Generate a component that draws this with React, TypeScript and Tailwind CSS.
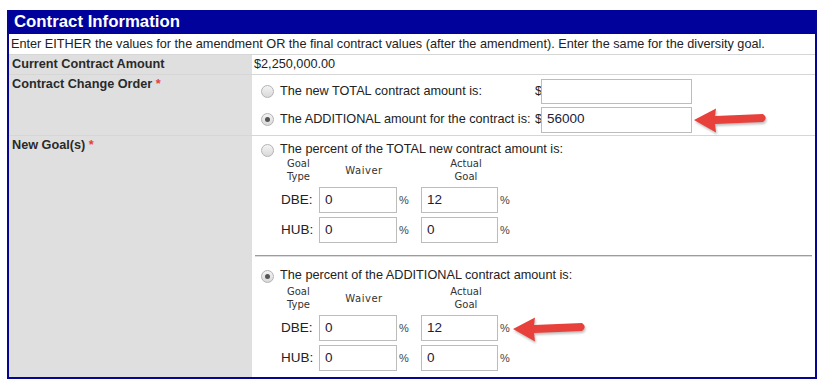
import React from 'react'

function Radio({ checked }: { checked?: boolean }) {
	return (
		<span className="w-[13px] h-[13px] shrink-0 rounded-full border border-[#b3b3b3] bg-gradient-to-b from-[#f4f4f4] to-[#d9d9d9] flex items-center justify-center">
			{checked && <span className="w-[5px] h-[5px] rounded-full bg-[#555]" />}
		</span>
	)
}

function TextBox({ value, width, height }: { value: string; width: string; height: string }) {
	return (
		<div className={`${width} ${height} border border-[#bcbcbc] bg-white pl-[5px] flex items-center text-[13.5px] text-[#1c1c3a]`}>
			{value}
		</div>
	)
}

function Arrow({ className }: { className: string }) {
	return (
		<svg
			className={`absolute drop-shadow-[1px_2px_1px_rgba(0,0,0,0.25)] ${className}`}
			width="78"
			height="28"
			viewBox="0 0 78 28"
		>
			<path d="M2 13 L24 1.5 L23 9 L71 7 Q76.5 11 71 15 L23 17 L24 25.5 Z" fill="#e8413c" />
		</svg>
	)
}

function GoalTable({ dbe, hub }: { dbe: [string, string]; hub: [string, string] }) {
	const small = "font-['DejaVu_Sans',Verdana,sans-serif] text-[10px] leading-[13px] text-[#333]"
	const rows: [string, [string, string]][] = [
		['DBE:', dbe],
		['HUB:', hub],
	]
	return (
		<div className="pl-[29px]">
			<div className="flex">
				<div className={`w-[38px] ${small} pl-[6px]`}>
					Goal
					<br />
					Type
				</div>
				<div className={`w-[102px] ${small} flex items-center justify-center pr-[12px] tracking-[0.5px]`}>Waiver</div>
				<div className={`w-[100px] ${small} text-center pr-[10px]`}>
					Actual
					<br />
					Goal
				</div>
			</div>
			<div className="flex flex-col gap-[4px] mt-[4px]">
				{rows.map(([label, vals]) => (
					<div key={label} className="flex items-center">
						<div className="w-[38px] text-[13.5px] text-[#222]">{label}</div>
						<div className="w-[102px] flex items-center">
							<TextBox value={vals[0]} width="w-[78px]" height="h-[26px]" />
							<span className="ml-[2px] text-[11px] text-[#444]">%</span>
						</div>
						<div className="flex items-center">
							<TextBox value={vals[1]} width="w-[77px]" height="h-[26px]" />
							<span className="ml-[2px] text-[11px] text-[#444]">%</span>
						</div>
					</div>
				))}
			</div>
		</div>
	)
}

export default function App() {
	return (
		<div className="relative w-[826px] h-[386px] bg-white pt-[10px] pl-[7px] font-['Liberation_Sans',Arial,sans-serif] text-[12.7px] text-[#222]">
			<div className="w-[810px] border-2 border-t-0 border-[#05058f]">
				<div className="h-[24px] bg-[#01019b] text-white font-bold text-[16.8px] leading-[24px] pl-[5px]">
					Contract Information
				</div>

				<div className="h-[21px] leading-[20px] pl-[2px] border-b border-[#d6d6d6]">
					Enter EITHER the values for the amendment OR the final contract values (after the amendment). Enter the same for the diversity goal.
				</div>

				<div className="flex h-[20px] border-b border-[#d6d6d6]">
					<div className="w-[243px] bg-[#dfdfdf] font-bold text-[#2a2a2a] pl-[3px] leading-[19px]">Current Contract Amount</div>
					<div className="pl-[2px] leading-[19px]">$2,250,000.00</div>
				</div>

				<div className="flex h-[61px] border-b border-[#d6d6d6]">
					<div className="w-[243px] bg-[#dfdfdf] font-bold text-[#2a2a2a] pl-[3px] pt-[2px] leading-[14px]">
						Contract Change Order <span className="text-[#e5413b]">*</span>
					</div>
					<div className="pl-[9px] pt-[4px] flex flex-col gap-[3px]">
						<div className="flex items-center h-[25px]">
							<Radio />
							<span className="ml-[6px] w-[255px]">The new TOTAL contract amount is:</span>
							<span className="w-[6px]">$</span>
							<TextBox value="" width="w-[151px]" height="h-[25px]" />
						</div>
						<div className="flex items-center h-[25px]">
							<Radio checked />
							<span className="ml-[6px] w-[255px]">The ADDITIONAL amount for the contract is:</span>
							<span className="w-[6px]">$</span>
							<TextBox value="56000" width="w-[151px]" height="h-[26px]" />
						</div>
					</div>
				</div>

				<div className="flex h-[241px]">
					<div className="w-[243px] bg-[#dfdfdf] font-bold text-[#2a2a2a] pl-[3px] pt-[2px] leading-[14px]">
						New Goal(s) <span className="text-[#e5413b]">*</span>
					</div>
					<div className="flex-1 pt-[7px]">
						<div className="pl-[9px] flex items-center h-[14px]">
							<Radio />
							<span className="ml-[6px]">The percent of the TOTAL new contract amount is:</span>
						</div>
						<GoalTable dbe={['0', '12']} hub={['0', '0']} />
						<div className="ml-[3px] mr-[3px] mt-[12px] border-t border-[#9d9d9d] border-b border-b-[#dcdcdc]" />
						<div className="pl-[9px] flex items-center h-[14px] mt-[12px]">
							<Radio checked />
							<span className="ml-[6px]">The percent of the ADDITIONAL contract amount is:</span>
						</div>
						<div className="mt-[2px]">
							<GoalTable dbe={['0', '12']} hub={['0', '0']} />
						</div>
					</div>
				</div>
			</div>

			<Arrow className="left-[692px] top-[107px]" />
			<Arrow className="left-[511px] top-[316px]" />
		</div>
	)
}
